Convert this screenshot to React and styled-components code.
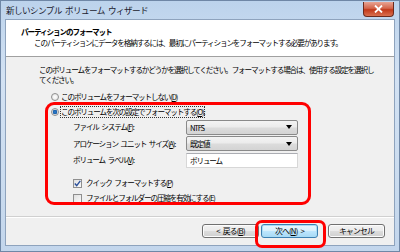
import React from 'react'
import styled, { createGlobalStyle } from 'styled-components'

const Global = createGlobalStyle`
  html, body { margin: 0; padding: 0; }
  body { width: 400px; height: 252px; overflow: hidden; }
  * { box-sizing: border-box; }
`

const Window = styled.div`
  position: relative;
  width: 400px;
  height: 252px;
  display: flex;
  flex-direction: column;
  background: linear-gradient(180deg, #bcd3ec 0%, #d3e2f3 30%, #cbdcef 70%, #c3d6ec 100%);
  border: 1px solid #6f87a6;
  font-family: "Noto Sans CJK JP", "Noto Sans", sans-serif;
  color: #000;
  word-spacing: 2px;
`

const TitleBar = styled.div`
  height: 18px;
  display: flex;
  align-items: center;
  justify-content: space-between;
  padding: 0 5px 0 5px;
`

const TitleText = styled.span`
  font-size: 8.6px;
  letter-spacing: -0.6px;
  color: #1b1b2e;
  line-height: 1;
`

const CloseButton = styled.div`
  width: 31px;
  height: 15px;
  margin-top: -2px;
  border: 1px solid #6b2a1d;
  border-top: none;
  border-radius: 0 0 4px 4px;
  background: linear-gradient(180deg, #e8a493 0%, #d4654b 45%, #c2391a 55%, #d9704f 100%);
  display: flex;
  align-items: center;
  justify-content: center;
`

const Client = styled.div`
  flex: 1;
  margin: 0 4px 5px 4px;
  border: 1px solid #8ea3bd;
  background: #f0f0f0;
  display: flex;
  flex-direction: column;
`

const Header = styled.div`
  height: 37px;
  background: #fff;
  border-bottom: 1px solid #a0a0a0;
  padding: 6px 0 0 15px;
`

const HeaderTitle = styled.div`
  font-size: 7.6px;
  font-weight: 700;
  letter-spacing: -1.1px;
  line-height: 11px;
`

const HeaderSub = styled.div`
  font-size: 7.6px;
  letter-spacing: -1.15px;
  line-height: 11px;
  padding-left: 13px;
`

const Body = styled.div`
  flex: 1;
  padding: 8px 0 0 33px;
  display: flex;
  flex-direction: column;
  font-size: 7.6px;
  letter-spacing: -1.15px;
`

const Para = styled.div`
  line-height: 10px;
  width: 340px;
`

const Options = styled.div`
  display: flex;
  flex-direction: column;
  padding-left: 12px;
  margin-top: 4px;
`

const OptionRow = styled.div`
  height: 15px;
  display: flex;
  align-items: center;
  gap: 2px;
`

const Radio = styled.span`
  width: 8px;
  height: 8px;
  border-radius: 50%;
  border: 1px solid #8f8f8f;
  background: radial-gradient(circle, ${p => (p.checked ? '#2a7fd4 0, #1c5fa8 2px, #e6e6e6 2.6px' : '#fff 0, #e9e9e9 3px')}, #f4f4f4 100%);
  flex: none;
`

const Focus = styled.span`
  outline: 1px dotted #333;
  outline-offset: 0;
  line-height: 10px;
`

const Form = styled.div`
  display: grid;
  grid-template-columns: 113px 112px;
  grid-auto-rows: 16.5px;
  align-items: center;
  padding-left: 34px;
  margin-top: 0;
`

const Combo = styled.div`
  height: 15px;
  border: 1px solid #8a8a8a;
  border-radius: 2px;
  background: linear-gradient(180deg, #f4f4f4 0%, #ebebeb 48%, #dcdcdc 52%, #d4d4d4 100%);
  display: flex;
  align-items: center;
  justify-content: space-between;
  padding: 0 5px 0 3px;
`

const Arrow = styled.span`
  width: 0;
  height: 0;
  border-left: 3px solid transparent;
  border-right: 3px solid transparent;
  border-top: 4px solid #000;
`

const TextBox = styled.div`
  height: 15px;
  border: 1px solid #d7d7d7;
  border-top-color: #abadb3;
  background: #fff;
  display: flex;
  align-items: center;
  padding-left: 3px;
`

const Checks = styled.div`
  display: flex;
  flex-direction: column;
  padding-left: 34px;
  margin-top: 7px;
`

const CheckBox = styled.span`
  width: 9px;
  height: 9px;
  border: 1px solid #8f8f8f;
  background: linear-gradient(135deg, #e0e0e0, #fafafa);
  display: flex;
  align-items: center;
  justify-content: center;
  flex: none;
  margin-right: 2px;
`

const Footer = styled.div`
  height: 29px;
  border-top: 1px solid #d0d0d0;
  box-shadow: inset 0 1px 0 #fff;
  display: flex;
  align-items: center;
  justify-content: flex-end;
  padding: 0 9px 1px 0;
  gap: 10px;
`

const ButtonPair = styled.div`
  display: flex;
  gap: 2px;
`

const Button = styled.div`
  width: 57px;
  height: 14px;
  border: 1px solid ${p => (p.primary ? '#3c7fb1' : '#707070')};
  border-radius: 3px;
  background: ${p =>
    p.primary
      ? 'linear-gradient(180deg, #eaf6fd 0%, #d9f0fc 48%, #bee6fd 52%, #a7d9f5 100%)'
      : 'linear-gradient(180deg, #f2f2f2 0%, #ebebeb 48%, #dddddd 52%, #cfcfcf 100%)'};
  box-shadow: inset 0 0 0 1px ${p => (p.primary ? '#a9dcf6' : '#fcfcfc')};
  font-size: 7.8px;
  letter-spacing: -0.8px;
  display: flex;
  align-items: center;
  justify-content: center;
  line-height: 1;
`

const Mark = styled.div`
  position: absolute;
  border: 3px solid #ff0000;
  border-radius: ${p => p.r}px;
  pointer-events: none;
`

const Label = styled.span`
  line-height: 1;
`

export default function App() {
  return (
    <>
      <Global />
      <Window>
        <TitleBar>
          <TitleText>新しいシンプル ボリューム ウィザード</TitleText>
          <CloseButton>
            <svg width="9" height="8" viewBox="0 0 9 8">
              <path d="M1 0.5 L8 7.5 M8 0.5 L1 7.5" stroke="#fff" strokeWidth="1.8" />
            </svg>
          </CloseButton>
        </TitleBar>
        <Client>
          <Header>
            <HeaderTitle>パーティションのフォーマット</HeaderTitle>
            <HeaderSub>このパーティションにデータを格納するには、最初にパーティションをフォーマットする必要があります。</HeaderSub>
          </Header>
          <Body>
            <Para>このボリュームをフォーマットするかどうかを選択してください。フォーマットする場合は、使用する設定を選択してください。</Para>
            <Options>
              <OptionRow>
                <Radio />
                <Label>このボリュームをフォーマットしない(<u>D</u>)</Label>
              </OptionRow>
              <OptionRow>
                <Radio checked />
                <Focus>このボリュームを次の設定でフォーマットする(<u>O</u>):</Focus>
              </OptionRow>
            </Options>
            <Form>
              <Label>ファイル システム(<u>F</u>):</Label>
              <Combo>
                <span>NTFS</span>
                <Arrow />
              </Combo>
              <Label>アロケーション ユニット サイズ(<u>A</u>):</Label>
              <Combo>
                <span>既定値</span>
                <Arrow />
              </Combo>
              <Label>ボリューム ラベル(<u>V</u>):</Label>
              <TextBox>ボリューム</TextBox>
            </Form>
            <Checks>
              <OptionRow>
                <CheckBox>
                  <svg width="7" height="7" viewBox="0 0 7 7">
                    <path d="M0.8 3.6 L2.7 5.6 L6.3 0.9" stroke="#2a4f9a" strokeWidth="1.4" fill="none" />
                  </svg>
                </CheckBox>
                <Label>クイック フォーマットする(<u>P</u>)</Label>
              </OptionRow>
              <OptionRow>
                <CheckBox />
                <Label>ファイルとフォルダーの圧縮を有効にする(<u>E</u>)</Label>
              </OptionRow>
            </Checks>
          </Body>
          <Footer>
            <ButtonPair>
              <Button>&lt; 戻る(<u>B</u>)</Button>
              <Button primary>次へ(<u>N</u>) &gt;</Button>
            </ButtonPair>
            <Button>キャンセル</Button>
          </Footer>
        </Client>
        <Mark r={9} style={{ left: 44, top: 101, width: 266, height: 103 }} />
        <Mark r={7} style={{ left: 254, top: 219, width: 71, height: 28 }} />
      </Window>
    </>
  )
}
